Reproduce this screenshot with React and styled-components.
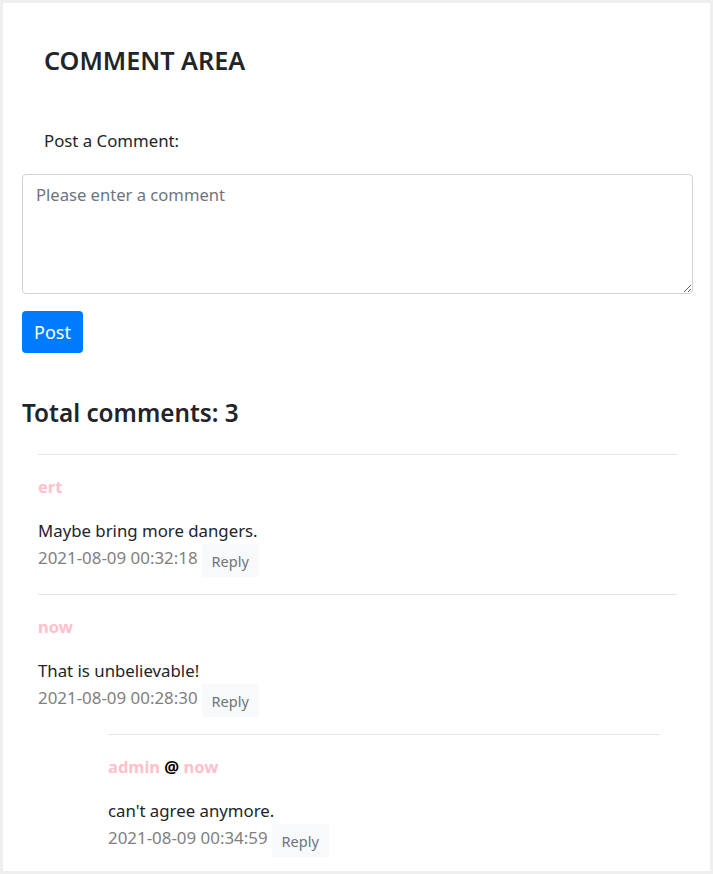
import React from "react";
import styled, { createGlobalStyle } from "styled-components";

const Global = createGlobalStyle`
  html, body { margin: 0; padding: 0; background: #fff; }
  body { font-family: "Noto Sans", "Open Sans", sans-serif; color: #212529; }
  * { box-sizing: border-box; }
`;

const Frame = styled.div`
  width: 713px;
  height: 874px;
  border: 3px solid #efefef;
  padding: 0 17px 0 19px;
  overflow: hidden;
`;

const Title = styled.h2`
  margin: 0;
  padding: 39px 0 0 22px;
  font-size: 25.2px;
  font-weight: 600;
  line-height: 36px;
`;

const Label = styled.div`
  padding: 51px 0 0 22px;
  font-size: 16.8px;
  line-height: 24px;
`;

const TextArea = styled.textarea`
  display: block;
  margin-top: 21px;
  width: 100%;
  height: 120px;
  padding: 8px 13px;
  border: 1px solid #ced4da;
  border-radius: 4px;
  font-family: inherit;
  font-size: 16.6px;
  line-height: 24px;
  color: #495057;
  resize: vertical;
  &::placeholder { color: #6c757d; }
`;

const PostButton = styled.button`
  margin-top: 17px;
  height: 42px;
  padding: 0 12px;
  border: none;
  border-radius: 4px;
  background: #007bff;
  color: #fff;
  font-family: inherit;
  font-size: 18px;
`;

const Total = styled.h3`
  margin: 0;
  padding-top: 42px;
  font-size: 24.3px;
  font-weight: 600;
  line-height: 36px;
`;

const List = styled.div`
  padding: 23px 16px 0;
`;

const Item = styled.div`
  margin-left: ${(p) => (p.$nested ? "70px" : "0")};
  margin-right: ${(p) => (p.$nested ? "17px" : "0")};
  border-top: 1px solid #e5e5e5;
  padding-top: 20px;
  height: 140px;
`;

const Author = styled.div`
  font-size: 16.5px;
  font-weight: 700;
  line-height: 24px;
  color: #000;
`;

const Name = styled.span`
  color: #ffc0cb;
`;

const Body = styled.div`
  margin-top: 20px;
  font-size: 16.8px;
  line-height: 24px;
`;

const Meta = styled.div`
  display: flex;
  align-items: flex-start;
  gap: 4px;
  font-size: 16.9px;
  line-height: 24px;
  color: #808080;
`;

const Date = styled.span`
  padding-top: 3px;
`;

const ReplyButton = styled.button`
  margin-top: 1px;
  height: 33px;
  padding: 0 10px;
  border: none;
  border-radius: 3px;
  background: #f8f9fa;
  color: #6c757d;
  font-family: inherit;
  font-size: 14.5px;
`;

const comments = [
  { author: "ert", text: "Maybe bring more dangers.", date: "2021-08-09 00:32:18" },
  { author: "now", text: "That is unbelievable!", date: "2021-08-09 00:28:30" },
  { author: "admin", to: "now", text: "can't agree anymore.", date: "2021-08-09 00:34:59", nested: true },
];

export default function App() {
  return (
    <Frame>
      <Global />
      <Title>COMMENT AREA</Title>
      <Label>Post a Comment:</Label>
      <TextArea placeholder="Please enter a comment" />
      <PostButton>Post</PostButton>
      <Total>Total comments: 3</Total>
      <List>
        {comments.map((c, i) => (
          <Item key={i} $nested={c.nested}>
            <Author>
              <Name>{c.author}</Name>
              {c.to && (
                <>
                  {" @ "}
                  <Name>{c.to}</Name>
                </>
              )}
            </Author>
            <Body>{c.text}</Body>
            <Meta>
              <Date>{c.date}</Date>
              <ReplyButton>Reply</ReplyButton>
            </Meta>
          </Item>
        ))}
      </List>
    </Frame>
  );
}
